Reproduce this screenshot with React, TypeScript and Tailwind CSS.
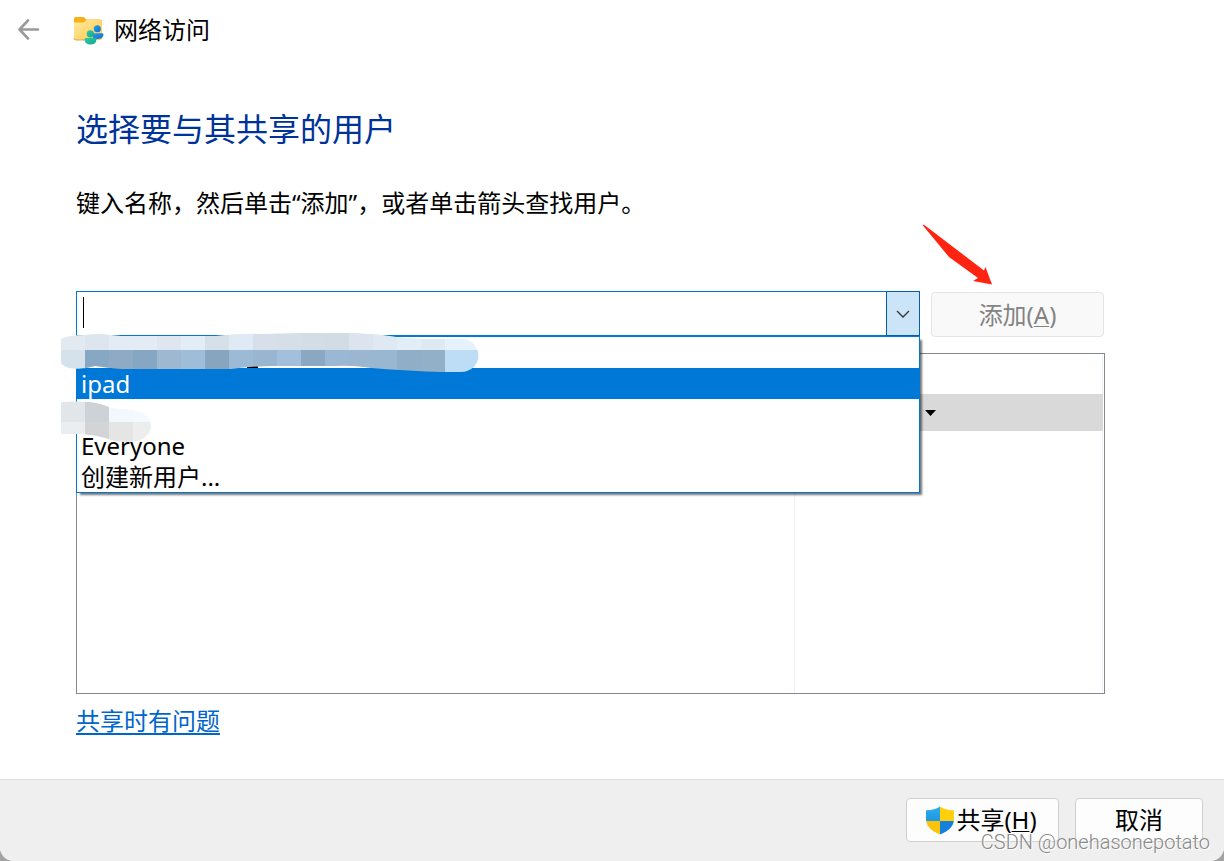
import { useState } from 'react';

const users = [
  { id: 'u1', name: '' },
  { id: 'u2', name: 'ipad' },
  { id: 'u3', name: '' },
  { id: 'u4', name: 'Everyone' },
  { id: 'new', name: '创建新用户...' },
];

// Mosaic tiles: top row colour, bottom row colour
const nameTiles = [
  ['#e2e9f1', '#d5e2ec'],
  ['#dde6ee', '#86a8c4'],
  ['#e3ecf5', '#8faac4'],
  ['#e3ecf5', '#86a7c3'],
  ['#dfe6ef', '#9fb8d2'],
  ['#e3edf6', '#9dbdd9'],
  ['#d5e0e9', '#87a5be'],
  ['#e0eaf4', '#9cbad5'],
  ['#d7e0ea', '#99b6d0'],
  ['#d5dfe7', '#a2c0db'],
  ['#d2dde6', '#8aa8c1'],
  ['#d1dce4', '#9ab7d3'],
  ['#dce5ef', '#9ab6d1'],
  ['#dfe9f3', '#9ab7d1'],
  ['#e1edf7', '#91aec7'],
  ['#dfe9f2', '#93b0c9'],
  ['#e5f1fc', '#bddcf5'],
  ['#e5f1fc', '#bddcf5'],
];

const groupTiles = [
  ['#e2e6e9', '#ebeef1'],
  ['#cdd2d7', '#d3d4d6'],
  ['#f2f8fe', '#e5e5e6'],
  ['#f3f9fe', '#ededed'],
];

function FolderIcon() {
  return (
    <svg width="31" height="29" viewBox="0 0 31 29" aria-hidden="true">
      <defs>
        <linearGradient id="folder" x1="0" y1="0" x2="1" y2="1">
          <stop offset="0" stopColor="#ffe9a0" />
          <stop offset="1" stopColor="#fccb4a" />
        </linearGradient>
        <linearGradient id="blueUser" x1="0" y1="0" x2="1" y2="1">
          <stop offset="0" stopColor="#2a9df0" />
          <stop offset="1" stopColor="#0c6fd0" />
        </linearGradient>
        <linearGradient id="greenUser" x1="0" y1="0" x2="1" y2="1">
          <stop offset="0" stopColor="#2fc8a8" />
          <stop offset="1" stopColor="#12a98c" />
        </linearGradient>
      </defs>
      <path d="M1 3Q1 1 3 1H10Q11 1 12 2L13.500 3.500H27Q29 3.500 29 5.500V10H1Z" fill="#f8b019" />
      <path d="M1 6.500H10Q11 6.500 12 5.500L13.500 4H27Q29 4 29 6V22Q29 24 27 24H3Q1 24 1 22Z" fill="url(#folder)" />
      <path d="M1 22Q1 24 3 24H14" fill="none" stroke="#c99a3a" strokeWidth="0.8" />
      <circle cx="24.300" cy="12.700" r="3.500" fill="url(#blueUser)" />
      <path d="M20 17.200H29Q30.500 17.200 30.500 18.500Q30 23 24.500 23Q19 23 19 18.500Z" fill="url(#blueUser)" />
      <circle cx="17.300" cy="17.800" r="3.600" fill="url(#greenUser)" />
      <path d="M13 22H22Q23.500 22 23.500 23.500Q23 28.500 17.500 28.500Q12 28.500 11.500 23.500Q11.500 22 13 22Z" fill="url(#greenUser)" />
    </svg>
  );
}

function ShieldIcon() {
  return (
    <svg width="30" height="29" viewBox="0 0 30 29" aria-hidden="true">
      <defs>
        <clipPath id="shield">
          <path d="M14 0.500Q8 4.500 0 4.300V13Q0 23 14 28.500Q28 23 28 13V4.300Q20 4.500 14 0.500Z" />
        </clipPath>
        <linearGradient id="shieldBlue" x1="0" y1="0" x2="0" y2="1">
          <stop offset="0" stopColor="#2fadee" />
          <stop offset="1" stopColor="#1f98e2" />
        </linearGradient>
      </defs>
      <g clipPath="url(#shield)">
        <rect width="14" height="15" fill="url(#shieldBlue)" />
        <rect x="14" width="15" height="15" fill="#ffd00b" />
        <rect y="15" width="14" height="14" fill="#fcc30b" />
        <rect x="14" y="15" width="15" height="14" fill="#1482dc" />
      </g>
    </svg>
  );
}

function NameMosaic() {
  return (
    <svg
      className="pointer-events-none absolute -left-[15px] top-[42px]"
      width="419"
      height="40"
      viewBox="0 0 419 40"
      aria-hidden="true"
    >
      <defs>
        <clipPath id="nameSmear">
          <path d="M0 6Q8 2 24 2Q36 0 50 2L60 3H155Q180 0 200 1L240 0H290Q320 1 335 4Q350 6 380 6H400A17 16 0 0 1 400 39H380Q350 38 310 35Q290 32 275 33H215Q190 33 170 36H60Q46 35 34 33Q22 37 8 35Q2 33 0 30Z" />
        </clipPath>
      </defs>
      <rect x="186" y="33" width="11" height="2" fill="#000" />
      <g clipPath="url(#nameSmear)">
        {nameTiles.map(([top, bottom], i) => (
          <g key={i}>
            <rect x={i * 24} width="24" height="17" fill={top} />
            <rect x={i * 24} y="17" width="24" height="23" fill={bottom} />
          </g>
        ))}
      </g>
    </svg>
  );
}

function GroupMosaic() {
  return (
    <svg
      className="pointer-events-none absolute -left-[15px] top-[110px]"
      width="90"
      height="42"
      viewBox="0 0 90 42"
      aria-hidden="true"
    >
      <defs>
        <clipPath id="groupSmear">
          <path d="M0 1Q14 0 28 1Q40 2 50 7L72 9Q89 12 90 25Q88 40 68 41Q54 41 44 37Q30 33 14 33H0Z" />
        </clipPath>
      </defs>
      <g clipPath="url(#groupSmear)">
        {groupTiles.map(([top, bottom], i) => (
          <g key={i}>
            <rect x={i * 24} width="24" height="21" fill={top} />
            <rect x={i * 24} y="21" width="24" height="21" fill={bottom} />
          </g>
        ))}
      </g>
    </svg>
  );
}

function UserPicker() {
  const [value, setValue] = useState('');
  const [selected, setSelected] = useState('u2');

  return (
    <div className="relative z-10 min-w-0 flex-1">
      <div className="flex h-[45px] border border-[#0078d7] bg-white">
        <input
          type="text"
          role="combobox"
          aria-label="用户名称"
          aria-expanded="true"
          aria-controls="user-list"
          value={value}
          onChange={(e) => setValue(e.target.value)}
          className="min-w-0 flex-1 px-[6px] caret-transparent outline-none"
        />
        <button
          type="button"
          aria-label="查找用户"
          className="-my-px -mr-px flex w-[34px] items-center justify-center border border-[#005fb0] bg-[#cce4f7]"
        >
          <svg width="14" height="8" viewBox="0 0 14 8" fill="none" stroke="#333" strokeWidth="1.3" aria-hidden="true">
            <path d="M1 1L7 7L13 1" />
          </svg>
        </button>
      </div>
      {/* Text cursor */}
      <span className="pointer-events-none absolute left-[7px] top-[6px] h-[31px] w-px bg-black"></span>

      <ul
        id="user-list"
        role="listbox"
        aria-label="用户"
        className="absolute inset-x-0 top-[45px] border border-[#0078d7] bg-white shadow-[3px_3px_2px_-1px_rgba(0,0,0,0.55)]"
      >
        {users.map((user) => (
          <li
            key={user.id}
            role="option"
            aria-selected={user.id === selected}
            onClick={() => setSelected(user.id)}
            className={`h-[31px] px-1 leading-[31px] ${
              user.id === selected ? 'bg-[#0078d7] text-white' : 'text-black'
            }`}
          >
            {user.name}
          </li>
        ))}
      </ul>
      <NameMosaic />
      <GroupMosaic />
    </div>
  );
}

export default function App() {
  return (
    <div className="min-h-screen bg-[#a3a3a3] font-['Noto_Sans','Noto_Sans_CJK_SC',sans-serif] text-[24px] text-black">
      <div className="relative flex min-h-screen flex-col overflow-hidden rounded-b-[14px] bg-white">
        <header className="flex h-[60px] items-center pl-[18px]">
          <button type="button" aria-label="返回" className="mr-[33px]">
            <svg width="22" height="22" viewBox="0 0 22 22" fill="none" stroke="#9b9b9b" strokeWidth="2.6" strokeLinecap="round" strokeLinejoin="round" aria-hidden="true">
              <path d="M10 1.500L1.500 10.500L10 19.500M1.500 10.500H20" />
            </svg>
          </button>
          <FolderIcon />
          <span className="ml-[10px] leading-8">网络访问</span>
        </header>

        <main className="flex flex-1 flex-col pl-[76px] pr-[119px] pt-[49px]">
          <h1 className="text-[32px] leading-10 text-[#003399]">选择要与其共享的用户</h1>
          <p className="mt-[38px] leading-8">键入名称，然后单击“添加”，或者单击箭头查找用户。</p>

          <div className="mt-[72px] flex gap-[11px] pr-px">
            <UserPicker />
            <button
              type="button"
              disabled
              className="mt-px h-[45px] w-[173px] rounded-[4px] border border-[#e5e5e5] bg-[#f9f9f9] leading-8 text-[#838383]"
            >
              添加(<u className="decoration-1 underline-offset-2">A</u>)
            </button>
          </div>

          <div className="mt-4 flex min-h-[341px] flex-col border border-[#828790] pr-px">
            <table className="w-full flex-1 table-fixed border-collapse">
              <thead>
                <tr className="h-10">
                  <th scope="col" aria-label="名称"></th>
                  <th scope="col" aria-label="权限级别" className="w-[308px] border-x border-[#ebf1f8]"></th>
                </tr>
              </thead>
              <tbody>
                <tr className="h-[37px] bg-[#d9d9d9]">
                  <td></td>
                  <td className="p-0">
                    <button type="button" aria-label="更改权限级别" className="ml-[130px] block">
                      <svg width="11" height="6" viewBox="0 0 11 6" aria-hidden="true">
                        <path d="M0 0H11L5.500 6Z" fill="#000" />
                      </svg>
                    </button>
                  </td>
                </tr>
                <tr className="h-[262px]">
                  <td></td>
                  <td className="border-x border-[#ebf1f8]"></td>
                </tr>
              </tbody>
            </table>
          </div>

          <a href="#help" className="mt-[11px] self-start leading-8 text-[#0066cc] underline decoration-2 underline-offset-3">
            共享时有问题
          </a>
        </main>

        {/* Red pointer towards the add button */}
        <svg
          className="pointer-events-none absolute right-[231px] top-[224px]"
          width="71"
          height="62"
          viewBox="0 0 71 62"
          aria-hidden="true"
        >
          <path d="M0.500 1L2 0.700L62 46.500L63.500 43L70 60.500L51 57L56 54L27 33Z" fill="#ff2412" />
        </svg>

        <footer className="flex h-[82px] justify-end gap-4 border-t border-[#dfdfdf] bg-[#efefef] pr-[21px] pt-[18px]">
          <button
            type="button"
            className="flex h-11 w-[153px] items-center justify-center rounded-[4px] border border-[#d0d0d0] bg-[#fdfdfd] pr-[2px] leading-8"
          >
            <ShieldIcon />
            <span>
              共享(<u className="decoration-1 underline-offset-2">H</u>)
            </span>
          </button>
          <button type="button" className="h-11 w-32 rounded-[4px] border border-[#d0d0d0] bg-[#fdfdfd] leading-8">
            取消
          </button>
        </footer>

        <span className="pointer-events-none absolute bottom-[7px] right-[14px] font-['Roboto',sans-serif] text-[20px] font-light leading-6 text-[#888888] [text-shadow:1px_1px_0_#ffffff]">
          CSDN @onehasonepotato
        </span>
      </div>
    </div>
  );
}
